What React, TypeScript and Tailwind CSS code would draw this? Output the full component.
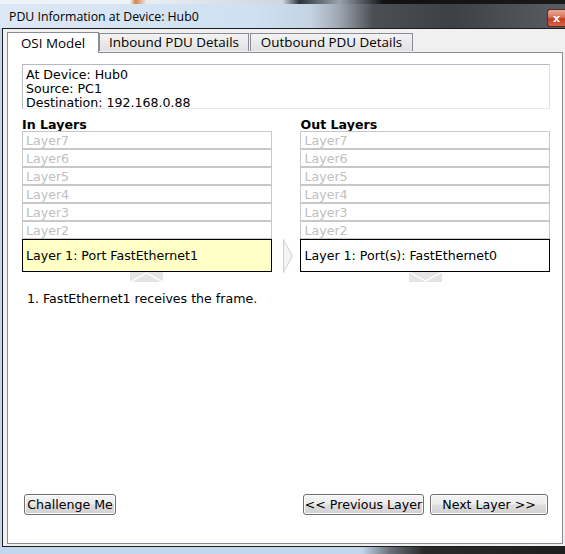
const upperLayers = ["Layer7", "Layer6", "Layer5", "Layer4", "Layer3", "Layer2"];

const body = "font-['DejaVu_Sans',sans-serif] text-[12.6px] text-black";
const tabFont = "font-['Open_Sans',sans-serif] text-[13.4px]";

function UpArrow() {
  return (
    <svg width="33" height="10" viewBox="0 0 33 10" className="mx-auto block">
      <rect x="0" y="0" width="33" height="10" fill="#e4e4e4" />
      <polyline points="0,10 16.5,1 33,10" fill="none" stroke="#ffffff" strokeWidth="1.4" />
    </svg>
  );
}

function DownArrow() {
  return (
    <svg width="33" height="10" viewBox="0 0 33 10" className="mx-auto block">
      <rect x="0" y="0" width="33" height="10" fill="#e4e4e4" />
      <polyline points="0,0 16.5,9 33,0" fill="none" stroke="#ffffff" strokeWidth="1.4" />
    </svg>
  );
}

function LayerColumn({
  title,
  layerOne,
  highlighted,
  arrow
}: {
  title: string;
  layerOne: string;
  highlighted?: boolean;
  arrow: "up" | "down";
}) {
  return (
    <div className="flex w-[250px] flex-col">
      <div className="h-[14px] pt-[1px] font-bold leading-[14px]">{title}</div>
      {upperLayers.map((layer) => (
        <div
          key={layer}
          className="h-[18px] border border-[#c8c8c8] bg-white pl-[3px] pt-[1px] leading-[15px] text-[#c0c0c0]"
        >
          {layer}
        </div>
      ))}
      <div
        className={`flex h-[33px] items-center border border-black pl-[3px] pt-[1px] ${
          highlighted ? "bg-[#ffffc6]" : "bg-white"
        }`}
      >
        {layerOne}
      </div>
      {arrow === "up" ? <UpArrow /> : <DownArrow />}
    </div>
  );
}

function WinButton({ label, width }: { label: string; width: string }) {
  return (
    <button
      className={`${width} h-[21px] rounded-[3px] border border-[#707070] bg-[linear-gradient(to_bottom,#f4f4f4_0%,#ececec_48%,#dedede_52%,#d0d0d0_100%)] p-0 pt-[1px] text-center leading-[18px] shadow-[inset_0_0_0_1px_#fcfcfc]`}
    >
      {label}
    </button>
  );
}

export default function App() {
  return (
    <div className="flex h-[554px] w-[565px] flex-col overflow-hidden bg-[#c3d7ec]">
      {/* desktop strip behind the window */}
      <div className="h-[4px] bg-[linear-gradient(to_right,#eef3f8_0%,#eef3f8_23%,#d9824a_24%,#e9eef3_26%,#cfd6dd_50%,#30343a_53%,#9aa3ad_60%,#111111_68%,#1a1a1a_100%)]" />

      {/* title bar */}
      <div className="flex h-[24px] items-center bg-[linear-gradient(to_right,#dce8f5_0%,#cfe0f2_45%,#c3d3e3_55%,#9ea7b1_60%,#4b4f55_66%,#3d4046_80%,#5a5e64_100%)]">
        <span className="pl-[9px] pt-[2px] font-['Open_Sans',sans-serif] text-[12.3px] text-black">
          PDU Information at Device: Hub0
        </span>
        <div className="ml-auto mt-[4px] flex h-[18px] w-[18px] items-center justify-center rounded-l-[3px] border border-r-0 border-[#5a2a20] bg-[linear-gradient(to_bottom,#eaa994_0%,#d9735a_45%,#c43c1e_55%,#da6448_100%)] font-['DejaVu_Sans',sans-serif] text-[11px] font-bold leading-none text-white">
          x
        </div>
      </div>

      {/* client area */}
      <div className="ml-[2px] h-[519px] border-y border-l border-[#1c1c1c] bg-[#f0f0f0] pl-[4px] pt-[3px]">
        <div className={`flex h-[20px] items-end ${body}`}>
          <div className={`relative z-10 mb-[-1px] flex h-[21px] w-[92px] items-center justify-center border-x border-t border-[#898c95] bg-white ${tabFont}`}>
            OSI Model
          </div>
          <div className={`mb-[1px] flex h-[18px] w-[150px] items-center justify-center border-x border-t border-[#898c95] bg-[linear-gradient(to_bottom,#f3f3f3,#e1e1e1)] ${tabFont}`}>
            Inbound PDU Details
          </div>
          <div className={`mb-[1px] ml-[1px] flex h-[18px] w-[163px] items-center justify-center border-x border-t border-[#898c95] bg-[linear-gradient(to_bottom,#f3f3f3,#e1e1e1)] ${tabFont}`}>
            Outbound PDU Details
          </div>
        </div>

        <div className={`flex h-[492px] w-[556px] flex-col border border-[#898c95] bg-white pl-[14px] pr-[12px] pt-[11px] ${body}`}>
          <div className="h-[45px] border border-[#b5b9c1] border-b-[#e3e9ef] border-r-[#dbdfe6] pl-[3px] pt-[3px] leading-[14px]">
            <div>At Device: Hub0</div>
            <div>Source: PC1</div>
            <div>Destination: 192.168.0.88</div>
          </div>

          <div className="mt-[8px] flex">
            <LayerColumn title="In Layers" layerOne="Layer 1: Port FastEthernet1" highlighted arrow="up" />
            <div className="w-[29px] pl-[11px] pt-[122px]">
              <svg width="11" height="34" viewBox="0 0 11 34" className="block">
                <polygon points="0.5,0.5 9.5,17 0.5,33.5" fill="#f4f4f4" stroke="#cfcfcf" strokeWidth="1" />
              </svg>
            </div>
            <LayerColumn title="Out Layers" layerOne="Layer 1: Port(s): FastEthernet0" arrow="down" />
          </div>

          <div className="mt-[9px] pl-[5px] pt-[1px] leading-[14px]">1. FastEthernet1 receives the frame.</div>

          <div className="mb-[28px] mr-[2px] mt-auto flex items-center pl-[2px]">
            <WinButton label="Challenge Me" width="w-[92px]" />
            <div className="ml-auto flex gap-[6px]">
              <WinButton label="<< Previous Layer" width="w-[121px]" />
              <WinButton label="Next Layer >>" width="w-[118px]" />
            </div>
          </div>
        </div>
      </div>

      {/* bottom frame */}
      <div className="h-[7px] bg-[linear-gradient(to_right,#c3d7ec_0%,#c3d7ec_64%,#6b7178_69%,#2a2a2a_75%,#1e1e1e_100%)]" />
    </div>
  );
}
